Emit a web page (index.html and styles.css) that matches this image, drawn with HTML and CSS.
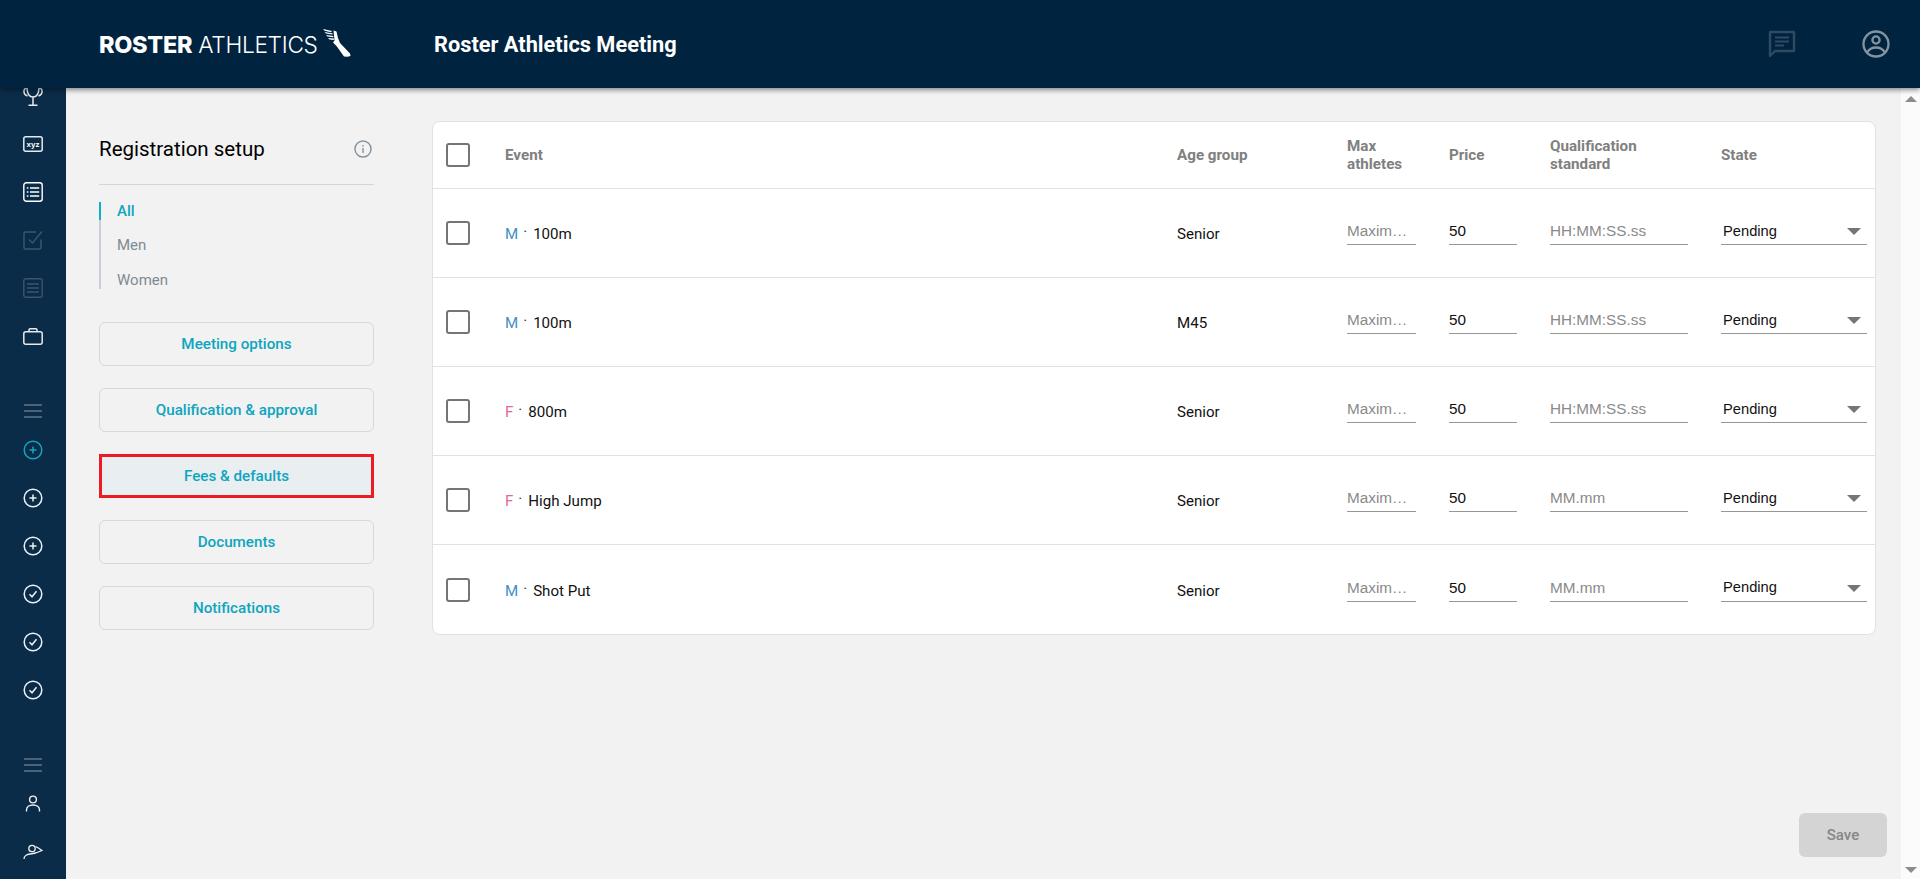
FILE: index.html
```html
<!DOCTYPE html>
<html lang="en">
<head>
<meta charset="utf-8">
<title>Roster Athletics Meeting</title>
<link rel="stylesheet" href="styles.css">
</head>
<body>
<header class="topbar">
  <div class="logo">
    <span class="logo-bold">ROSTER</span><span class="logo-light">ATHLETICS</span>
    <svg class="logo-shoe" viewBox="0 0 28 28" width="28" height="28" fill="#fff">
      <path d="M0 0 9 2 8 3.200 1.500 1.800ZM1.500 3 10 4.400 9.200 5.600 3 4.600ZM3 6 10.500 7 10 8.200 4.500 7.400ZM5 9 11 9.600 10.800 11 6.500 10.400Z"/>
      <path d="M10.500 1.500 13.500 2.500 15 9 17 14 27 24.500 27.500 27 24.500 27.800 21 27.500 13.500 17 10 13.500 11.500 11.500Z"/>
    </svg>
  </div>
  <h1 class="meeting-title">Roster Athletics Meeting</h1>
  <div class="top-actions">
    <svg class="ic-chat" viewBox="0 0 28 28" width="28" height="28" fill="none"><path d="M2 2h24v19H7l-5 5z" stroke="#2f4a62" stroke-width="2.400" stroke-linejoin="round"/><path d="M7 7.500h14M7 11.500h14M7 15.500h9" stroke="#2f4a62" stroke-width="2.200"/></svg>
    <svg class="ic-user" viewBox="0 0 28 28" width="28" height="28" fill="none" stroke="#84939f" stroke-width="2.300"><circle cx="14" cy="14" r="12.500"/><circle cx="14" cy="10" r="3.600"/><path d="M5 22.500c2-3.400 5-5 9-5s7 1.600 9 5"/></svg>
  </div>
</header>

<div class="shell">
  <nav class="sidenav">
    <div class="nav-group nav-first">
      <div class="nav-item"><svg class="nav-trophy" viewBox="0 0 20 30" width="20" height="30" fill="none" stroke="#e6eaee" stroke-width="1.500"><path d="M4 10c0 7 2.500 10 6 10s6-3 6-10M4 11C1.500 11 .8 13 1 15c.2 2 1.500 3.500 3.500 4M16 11c2.500 0 3.200 2 3 4-.2 2-1.500 3.500-3.500 4M10 20v8M5.500 28.300h9"/></svg></div>
      <div class="nav-item"><svg viewBox="0 0 20 16" width="20" height="16" fill="none"><rect x=".8" y=".8" width="18.400" height="14.400" rx="2" stroke="#e6eaee" stroke-width="1.500"/><text x="10" y="11" text-anchor="middle" class="xyz">xyz</text></svg></div>
      <div class="nav-item"><svg viewBox="0 0 20 20" width="20" height="20" fill="none" stroke="#fff" stroke-width="1.400"><rect x=".8" y=".8" width="18.400" height="18.400" rx="2.500"/><path d="M3.800 6h1.600M3.800 10h1.600M3.800 14h1.600M7 6h9.200M7 10h9.200M7 14h9.200"/></svg></div>
      <div class="nav-item"><svg viewBox="0 0 20 20" width="20" height="20" fill="none" stroke="#3b556d" stroke-width="1.500"><path d="M18 9.500V17.500a1.500 1.500 0 0 1-1.500 1.500h-14A1.500 1.500 0 0 1 1 17.500V3.500A1.500 1.500 0 0 1 2.500 2H13"/><path d="M6 9.500l3.500 3.500L19 1.500"/></svg></div>
      <div class="nav-item"><svg viewBox="0 0 20 20" width="20" height="20" fill="none" stroke="#3b556d" stroke-width="1.400"><rect x=".8" y=".8" width="18.400" height="18.400" rx="2"/><path d="M4 6h12M4 10h12M4 14h12"/></svg></div>
      <div class="nav-item"><svg viewBox="0 0 20 17" width="20" height="17" fill="none" stroke="#e6eaee" stroke-width="1.500"><rect x=".8" y="3.800" width="18.400" height="12.400" rx="2"/><path d="M6 3.800V2a1.200 1.200 0 0 1 1.200-1.200h5.600A1.200 1.200 0 0 1 14 2v1.800"/></svg></div>
    </div>
    <div class="nav-group nav-gap">
      <div class="nav-menu"><svg viewBox="0 0 18 14" width="18" height="14" stroke="#8a99a7" stroke-width="1.200"><path d="M0 1h18M0 7h18M0 13h18"/></svg></div>
      <div class="nav-item"><svg viewBox="0 0 20 20" width="20" height="20" fill="none" stroke="#12a6c2" stroke-width="1.500"><circle cx="10" cy="10" r="8.800"/><path d="M6.500 10h7M10 6.500v7"/></svg></div>
      <div class="nav-item"><svg viewBox="0 0 20 20" width="20" height="20" fill="none" stroke="#eef1f3" stroke-width="1.500"><circle cx="10" cy="10" r="8.800"/><path d="M6.500 10h7M10 6.500v7"/></svg></div>
      <div class="nav-item"><svg viewBox="0 0 20 20" width="20" height="20" fill="none" stroke="#eef1f3" stroke-width="1.500"><circle cx="10" cy="10" r="8.800"/><path d="M6.500 10h7M10 6.500v7"/></svg></div>
      <div class="nav-item"><svg viewBox="0 0 20 20" width="20" height="20" fill="none" stroke="#eef1f3" stroke-width="1.500"><circle cx="10" cy="10" r="8.800"/><path d="M6.500 10.300l2.500 2.500 4.500-5.600"/></svg></div>
      <div class="nav-item"><svg viewBox="0 0 20 20" width="20" height="20" fill="none" stroke="#eef1f3" stroke-width="1.500"><circle cx="10" cy="10" r="8.800"/><path d="M6.500 10.300l2.500 2.500 4.500-5.600"/></svg></div>
      <div class="nav-item"><svg viewBox="0 0 20 20" width="20" height="20" fill="none" stroke="#eef1f3" stroke-width="1.500"><circle cx="10" cy="10" r="8.800"/><path d="M6.500 10.300l2.500 2.500 4.500-5.600"/></svg></div>
    </div>
    <div class="nav-group nav-gap">
      <div class="nav-menu"><svg viewBox="0 0 18 14" width="18" height="14" stroke="#8a99a7" stroke-width="1.200"><path d="M0 1h18M0 7h18M0 13h18"/></svg></div>
      <div class="nav-item"><svg viewBox="0 0 20 20" width="20" height="20" fill="none" stroke="#eef1f3" stroke-width="1.400"><circle cx="10" cy="5.500" r="3.400"/><path d="M3.500 17.500v-1.500c0-3 2.800-5 6.500-5s6.500 2 6.500 5v1.500"/></svg></div>
      <div class="nav-item"><svg viewBox="0 0 20 20" width="20" height="20" fill="none" stroke="#eef1f3" stroke-width="1.300"><circle cx="9" cy="6.500" r="3.200"/><path d="M1 17c0-3 3-4.800 6-5 4-.2 7-1 12-3.500-2-1.500-4-3-6.500-4"/></svg></div>
    </div>
  </nav>

  <main class="content">
    <aside class="panel">
      <div class="panel-head">
        <h2 class="panel-title">Registration setup</h2>
        <svg class="info" viewBox="0 0 18 18" width="18" height="18" fill="none" stroke="#85929e" stroke-width="1.400"><circle cx="9" cy="9" r="8"/><path d="M9 8v5M9 5v1.500"/></svg>
      </div>
      <ul class="filters">
        <li class="filter filter-on">All</li>
        <li class="filter">Men</li>
        <li class="filter">Women</li>
      </ul>
      <div class="panel-buttons">
        <button class="panel-btn">Meeting options</button>
        <button class="panel-btn">Qualification &amp; approval</button>
        <button class="panel-btn panel-btn-on">Fees &amp; defaults</button>
        <button class="panel-btn">Documents</button>
        <button class="panel-btn">Notifications</button>
      </div>
    </aside>

    <section class="table">
      <div class="row row-head">
        <input class="check" type="checkbox">
        <div>Event</div>
        <div>Age group</div>
        <div>Max athletes</div>
        <div>Price</div>
        <div>Qualification standard</div>
        <div>State</div>
      </div>
      <div class="row">
        <input class="check" type="checkbox">
        <div class="event"><span class="sex-m">M</span><span class="dot">·</span>100m</div>
        <div class="age">Senior</div>
        <input class="field" placeholder="Maximum athletes">
        <input class="field" value="50">
        <input class="field" placeholder="HH:MM:SS.ss">
        <div class="state"><select class="state-select"><option>Pending</option></select></div>
      </div>
      <div class="row">
        <input class="check" type="checkbox">
        <div class="event"><span class="sex-m">M</span><span class="dot">·</span>100m</div>
        <div class="age">M45</div>
        <input class="field" placeholder="Maximum athletes">
        <input class="field" value="50">
        <input class="field" placeholder="HH:MM:SS.ss">
        <div class="state"><select class="state-select"><option>Pending</option></select></div>
      </div>
      <div class="row">
        <input class="check" type="checkbox">
        <div class="event"><span class="sex-f">F</span><span class="dot">·</span>800m</div>
        <div class="age">Senior</div>
        <input class="field" placeholder="Maximum athletes">
        <input class="field" value="50">
        <input class="field" placeholder="HH:MM:SS.ss">
        <div class="state"><select class="state-select"><option>Pending</option></select></div>
      </div>
      <div class="row">
        <input class="check" type="checkbox">
        <div class="event"><span class="sex-f">F</span><span class="dot">·</span>High Jump</div>
        <div class="age">Senior</div>
        <input class="field" placeholder="Maximum athletes">
        <input class="field" value="50">
        <input class="field" placeholder="MM.mm">
        <div class="state"><select class="state-select"><option>Pending</option></select></div>
      </div>
      <div class="row">
        <input class="check" type="checkbox">
        <div class="event"><span class="sex-m">M</span><span class="dot">·</span>Shot Put</div>
        <div class="age">Senior</div>
        <input class="field" placeholder="Maximum athletes">
        <input class="field" value="50">
        <input class="field" placeholder="MM.mm">
        <div class="state"><select class="state-select"><option>Pending</option></select></div>
      </div>
    </section>

    <button class="save">Save</button>
  </main>

  <div class="scrollbar">
    <span class="arrow-up"></span>
    <span class="arrow-down"></span>
  </div>
</div>
</body>
</html>
```
FILE: styles.css
```css
* { box-sizing: border-box; }
html, body { margin: 0; height: 100%; overflow: hidden; }
body { font-family: Roboto, "Liberation Sans", sans-serif; background: #f2f2f2; display: flex; flex-direction: column; }

.topbar { height: 88px; flex: none; background: #00233f; display: flex; align-items: center; padding: 0 30px 0 99px; position: relative; z-index: 2; box-shadow: 0 2px 5px rgba(0,0,0,.45); }
.logo { display: flex; align-items: center; width: 335px; color: #fff; font-family: Inter, Roboto, sans-serif; letter-spacing: -.3px; }
.logo-bold { font-weight: 800; font-size: 23.500px; margin-right: 6px; }
.logo-light { font-weight: 300; font-size: 22.700px; }
.logo-shoe { margin: -3px 0 0 5px; }
.meeting-title { margin: 0; font-size: 21.750px; font-weight: 700; color: #fff; flex: 1; }
.top-actions { display: flex; gap: 66px; }

.shell { flex: 1; display: flex; min-height: 0; }
.sidenav { width: 66px; flex: none; background: #0b2c49; overflow: hidden; }
.nav-first { margin-top: -16px; }
.nav-trophy { margin-top: -8px; }
.nav-gap { margin-top: 36px; }
.nav-item { height: 48px; display: flex; align-items: center; justify-content: center; }
.nav-menu { height: 30px; display: flex; align-items: center; justify-content: center; margin-left: -1px; }
.xyz { font: 700 8px "Liberation Sans", sans-serif; fill: #fff; }

.content { flex: 1; display: flex; align-items: flex-start; gap: 58px; padding: 33px 24px 0 33px; position: relative; min-width: 0; }

.panel { width: 275px; flex: none; }
.panel-head { height: 64px; display: flex; align-items: center; justify-content: space-between; border-bottom: 1px solid #d5d5d5; padding-right: 2px; }
.panel-title { margin: -7px 0 0; font-size: 20.500px; font-weight: 400; color: #000; }
.info { margin-top: -7px; }
.filters { list-style: none; margin: 17px 0 0; padding: 0; border-left: 2px solid #c9cfd6; height: 87px; position: relative; }
.filter { height: 35px; padding-left: 16px; font-size: 15px; line-height: 19px; color: #808a94; }
.filter-on { color: #0ea5bf; font-weight: 500; box-shadow: -2px 0 0 #0cb0c8; height: 18px; margin-bottom: 16px; }
.panel-buttons { display: flex; flex-direction: column; gap: 22px; margin-top: 33px; }
.panel-btn { height: 44px; background: none; border: 1.500px solid #d8d8d8; border-radius: 6px; font: 500 15.200px Roboto, sans-serif; color: #0ea5bf; padding: 0; }
.panel-btn-on { background: #e9eef1; border: 3px solid #ed1c24; border-radius: 0; }

.table { width: 1444px; flex: none; background: #fff; border: 1px solid #e2e2e2; border-radius: 8px; }
.row { display: grid; grid-template-columns: 26px 639px 137px 69px 68px 138px 146px; column-gap: 33px; align-items: center; height: 89px; padding-left: 13px; border-bottom: 1px solid #e2e2e2; font-size: 15px; color: #111; }
.row:last-child { border-bottom: 0; }
.row-head { height: 67px; font-size: 15.200px; font-weight: 700; color: #808080; line-height: 18px; }
.check { appearance: none; width: 24px; height: 24px; margin: 0; border: 2px solid #757575; border-radius: 3px; background: #fff; }
.sex-m { color: #3f8fc7; }
.sex-f { color: #e0699b; }
.dot { margin: 0 6px 0 5px; color: #333; position: relative; top: -2px; }
.event, .age { padding-top: 2px; font-size: 15.100px; }
.field { width: 100%; height: 26px; padding: 0 7px 1px 0; margin-top: -2px; border: 0; border-bottom: 1px solid #969696; background: none; font: 15.300px "Liberation Sans", sans-serif; color: #111; text-overflow: ellipsis; outline: 0; }
.field::placeholder { color: #8a8a8a; opacity: 1; }
.state { position: relative; }
.state::after { content: ""; position: absolute; right: 6px; top: 7px; border: 7px solid transparent; border-top-color: #757575; border-bottom: 0; pointer-events: none; }
.state-select { appearance: none; width: 100%; height: 26px; margin-top: -2px; display: block; padding: 0 0 2px 2px; border: 0; border-bottom: 1px solid #969696; border-radius: 0; background: none; font: 14.700px "Liberation Sans", sans-serif; color: #111; }

.save { position: absolute; right: 14px; bottom: 22px; width: 88px; height: 44px; border: 0; border-radius: 6px; background: #d4d4d4; color: #868686; font: 500 15px Roboto, sans-serif; }

.scrollbar { width: 19px; flex: none; background: #fbfbfb; display: flex; flex-direction: column; justify-content: space-between; align-items: center; padding: 8px 0 6px; }
.arrow-up { border: 6.500px solid transparent; border-bottom-color: #8c8c8c; border-top: 0; }
.arrow-down { border: 6.500px solid transparent; border-top-color: #8c8c8c; border-bottom: 0; }
```
